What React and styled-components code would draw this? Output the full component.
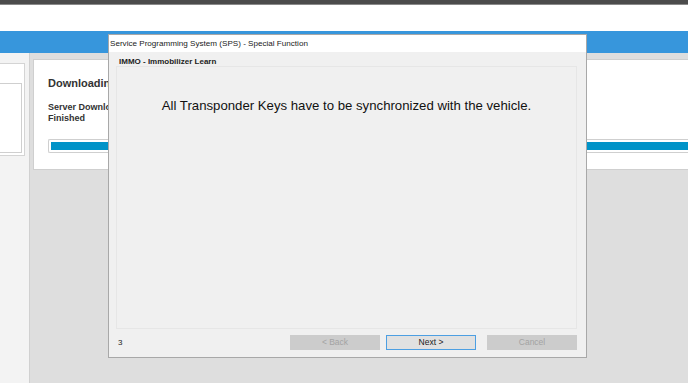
import styled, { createGlobalStyle } from "styled-components";

const Global = createGlobalStyle`
  html, body { margin:0; padding:0; }
  body { font-family:"Liberation Sans", Arial, sans-serif; background:#dedede; }
`;

const Screen = styled.div`
  position:relative;
  width:688px;
  height:383px;
  overflow:hidden;
  display:flex;
  flex-direction:column;
  background:#dedede;
`;
const TopStrip = styled.div`
  height:4px;
  background:#4c4c4c;
  border-bottom:1px solid #8a8a8a;
`;
const Header = styled.div`
  height:26px;
  background:#fff;
`;
const BlueBar = styled.div`
  height:22px;
  background:#3796dc;
`;
const Body = styled.div`
  flex:1;
  display:flex;
`;
const Sidebar = styled.div`
  width:29px;
  background:#f3f3f3;
  border-right:1px solid #d0d0d0;
  padding-top:10px;
`;
const SideCard = styled.div`
  width:25px;
  height:93px;
  background:#fff;
  border:1px solid #d4d4d4;
  border-left:none;
  padding-top:19px;
  box-sizing:border-box;
`;
const SideInner = styled.div`
  width:22px;
  height:70px;
  border:1px solid #cfcfcf;
  border-left:none;
  box-sizing:border-box;
`;
const Main = styled.div`
  flex:1;
  padding:6px 0 0 3px;
`;
const Card = styled.div`
  height:111px;
  background:#fff;
  border:1px solid #cfcfcf;
  border-right:none;
  box-sizing:border-box;
  padding:16px 0 0 14px;
  color:#333;
`;
const CardTitle = styled.div`
  font-weight:bold;
  font-size:11px;
  line-height:14px;
`;
const CardText = styled.div`
  margin-top:12px;
  font-weight:bold;
  font-size:9px;
  line-height:11px;
`;
const Progress = styled.div`
  margin-top:15px;
  height:14px;
  border:1px solid #cfcfcf;
  border-right:none;
  border-radius:2px 0 0 2px;
  padding:2px 0 2px 2px;
  box-sizing:border-box;
`;
const ProgressFill = styled.div`
  height:100%;
  background:#0093c8;
`;

const Dialog = styled.div`
  position:absolute;
  left:108px;
  top:34px;
  width:479px;
  height:324px;
  box-sizing:border-box;
  background:#f0f0f0;
  border:1px solid #a8a8a8;
  display:flex;
  flex-direction:column;
`;
const TitleBar = styled.div`
  height:17px;
  background:#fff;
  font-size:8.1px;
  line-height:17px;
  padding-left:1px;
  color:#222;
`;
const DialogBody = styled.div`
  flex:1;
  display:flex;
  flex-direction:column;
  padding:3px 9px 0 7px;
`;
const Step = styled.div`
  font-size:8px;
  font-weight:bold;
  color:#222;
  padding-left:3px;
  height:11px;
  line-height:14px;
`;
const Panel = styled.div`
  height:263px;
  border:1px solid #e6e6e6;
  box-sizing:border-box;
  text-align:center;
  padding-top:31px;
`;
const Message = styled.div`
  font-size:13.2px;
  color:#111;
`;
const Footer = styled.div`
  display:flex;
  align-items:center;
  height:27px;
  padding-left:2px;
`;
const PageNo = styled.div`
  font-size:8px;
  color:#222;
  flex:1;
`;
const Btn = styled.div`
  width:90px;
  height:15px;
  box-sizing:border-box;
  margin-left:${p => p.$gap}px;
  font-size:8.5px;
  line-height:13px;
  text-align:center;
  background:${p => p.$disabled ? "#cccccc" : "#e1e1e1"};
  color:${p => p.$disabled ? "#a3a3a3" : "#222"};
  border:1px solid ${p => p.$disabled ? "#cccccc" : "#4d9fe2"};
`;

export default function App() {
  return (
    <>
      <Global />
      <Screen>
        <TopStrip />
        <Header />
        <BlueBar />
        <Body>
          <Sidebar>
            <SideCard><SideInner /></SideCard>
          </Sidebar>
          <Main>
            <Card>
              <CardTitle>Downloading</CardTitle>
              <CardText>Server Download<br />Finished</CardText>
              <Progress><ProgressFill /></Progress>
            </Card>
          </Main>
        </Body>
        <Dialog>
          <TitleBar>Service Programming System (SPS) - Special Function</TitleBar>
          <DialogBody>
            <Step>IMMO - Immobilizer Learn</Step>
            <Panel>
              <Message>All Transponder Keys have to be synchronized with the vehicle.</Message>
            </Panel>
            <Footer>
              <PageNo>3</PageNo>
              <Btn $disabled $gap={0}>&lt; Back</Btn>
              <Btn $gap={6}>Next &gt;</Btn>
              <Btn $disabled $gap={11}>Cancel</Btn>
            </Footer>
          </DialogBody>
        </Dialog>
      </Screen>
    </>
  );
}
